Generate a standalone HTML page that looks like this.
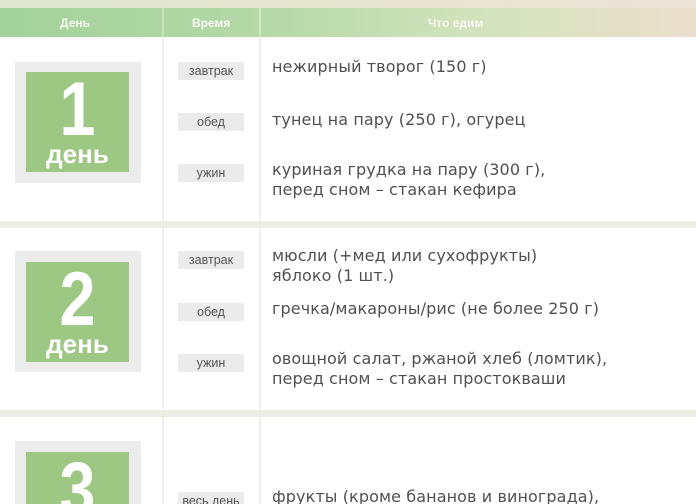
<!DOCTYPE html>
<html><head><meta charset="utf-8"><style>
*{margin:0;padding:0;box-sizing:border-box}
html,body{width:696px;height:504px;overflow:hidden}
body{background:#fff;position:relative;font-family:"Liberation Sans","DejaVu Sans",sans-serif}
.a{position:absolute}
.top{left:0;top:0;width:696px;height:8px;background:linear-gradient(90deg,#dfe6cf,#e8e6d2 60%,#ece4d8)}
.hdr{left:0;top:8px;width:696px;height:29px;background:linear-gradient(90deg,#a3d29a 0%,#b2d8a6 35%,#d3e3bd 70%,#ebdfcc 100%);color:#f6f9f0;font-size:12px;font-weight:bold}
.hdr span{position:absolute;top:8px}
.vl{width:2px;background:#f0f0ee}
.sep{left:0;width:696px;height:7px;background:#eceee6}
.ob{left:15px;width:126px;height:121px;background:#ececec}
.ib{left:26px;width:103px;height:100px;background:#9dc883;color:#fff;font-weight:bold;text-align:center;overflow:hidden}
.ib .n{position:absolute;left:0;width:100%;top:0px;font-size:76px;line-height:76px;transform:scaleX(0.85)}
.ib .d{position:absolute;left:0;width:100%;top:69px;font-size:26px;line-height:26px}
.p{left:178px;width:66px;height:18px;background:#ebebeb;color:#555;font-size:12.5px;text-align:center;line-height:18px}
.t{left:272px;color:#505050;line-height:20px;letter-spacing:0.1px;font-family:"DejaVu Sans","Liberation Sans",sans-serif;font-size:16px;white-space:nowrap}
</style></head><body>
<div class="a top"></div>
<div class="a hdr"><span style="left:60px">День</span><span style="left:192px">Время</span><span style="left:428px">Что едим</span></div>
<div class="a" style="left:162px;top:8px;width:2px;height:29px;background:#c8e4bd"></div>
<div class="a" style="left:259px;top:8px;width:2px;height:29px;background:#d4e8c4"></div>
<div class="a vl" style="left:162px;top:37px;height:467px"></div>
<div class="a vl" style="left:259px;top:37px;height:467px"></div>
<div class="a sep" style="top:221px"></div>
<div class="a sep" style="top:410px"></div>

<div class="a ob" style="top:62px"></div>
<div class="a ib" style="top:72px"><div class="n">1</div><div class="d">день</div></div>
<div class="a p" style="top:62px">завтрак</div>
<div class="a p" style="top:113px">обед</div>
<div class="a p" style="top:164px">ужин</div>
<div class="a t" style="top:57px">нежирный творог (150 г)</div>
<div class="a t" style="top:110px">тунец на пару (250 г), огурец</div>
<div class="a t" style="top:160px">куриная грудка на пару (300 г),<br>перед сном – стакан кефира</div>

<div class="a ob" style="top:251px"></div>
<div class="a ib" style="top:262px"><div class="n">2</div><div class="d">день</div></div>
<div class="a p" style="top:251px">завтрак</div>
<div class="a p" style="top:303px">обед</div>
<div class="a p" style="top:354px">ужин</div>
<div class="a t" style="top:246px">мюсли (+мед или сухофрукты)<br>яблоко (1 шт.)</div>
<div class="a t" style="top:299px">гречка/макароны/рис (не более 250 г)</div>
<div class="a t" style="top:349px">овощной салат, ржаной хлеб (ломтик),<br>перед сном – стакан простокваши</div>

<div class="a ob" style="top:441px;height:63px"></div>
<div class="a ib" style="top:452px;height:52px"><div class="n">3</div></div>
<div class="a p" style="top:492px;height:12px;overflow:hidden">весь день</div>
<div class="a t" style="top:487px;height:17px;overflow:hidden">фрукты (кроме бананов и винограда),</div>
</body></html>
